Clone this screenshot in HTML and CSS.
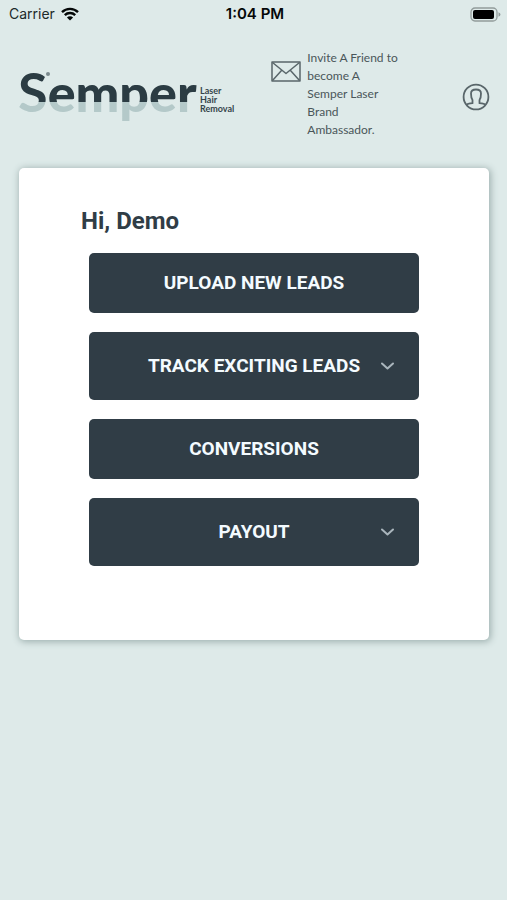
FILE: index.html
```html
<!DOCTYPE html>
<html lang="en">
<head>
<meta charset="utf-8">
<meta name="viewport" content="width=device-width, initial-scale=1">
<title>Semper Laser Hair Removal</title>
<link rel="stylesheet" href="styles.css">
</head>
<body>
<div class="status">
  <div class="carrier">
    <span>Carrier</span>
    <svg width="18" height="14" viewBox="0 0 18 14" aria-hidden="true">
      <path d="M1 5.2a11.4 11.4 0 0 1 16 0M3.8 8.2a7.4 7.4 0 0 1 10.4 0" fill="none" stroke="#050808" stroke-width="2.4"/>
      <path d="M9 13.6 5.9 10.5a4.4 4.4 0 0 1 6.2 0Z" fill="#050808"/>
    </svg>
  </div>
  <time class="time">1:04 PM</time>
  <svg class="battery" width="31" height="15" viewBox="0 0 31 15" aria-hidden="true">
    <rect x="1" y="1" width="26" height="13" rx="4" fill="none" stroke="#929c9b" stroke-width="1.3"/>
    <rect x="3" y="3" width="21" height="9" rx="2" fill="#000"/>
    <path d="M28.5 5.3v4.4q2-.7 2-2.2t-2-2.2Z" fill="#929c9b"/>
  </svg>
</div>
<header class="header">
  <a class="logo" href="#">
    <svg class="mark" width="178" height="60" viewBox="0 0 178 60">
      <defs>
        <linearGradient id="split" gradientUnits="userSpaceOnUse" x1="0" y1="0" x2="0" y2="60">
          <stop offset="0.57" stop-color="#2b3c43"/>
          <stop offset="0.57" stop-color="#b4c9c9"/>
        </linearGradient>
      </defs>
      <text class="wordmark" x="-1" y="44" fill="url(#split)"><tspan class="initial">S</tspan>emper</text>
      <circle cx="29" cy="6" r="2" fill="#7c8b8e"/>
    </svg>
    <span class="tagline"><span>Laser</span><span>Hair</span><span>Removal</span></span>
  </a>
  <a class="invite" href="#">
    <svg class="mail" width="30" height="21" viewBox="0 0 30 21" fill="none" stroke="#59666a" stroke-width="1.5" stroke-linejoin="round" aria-hidden="true">
      <rect x="1" y="1" width="28" height="19"/>
      <path d="M1.500 1.500 15 12.500 28.500 1.500M1.500 19.500 10.500 9.500M28.500 19.500 19.500 9.500"/>
    </svg>
    <span class="invite-text">Invite A Friend to become A Semper Laser Brand Ambassador.</span>
  </a>
  <button class="profile" type="button" aria-label="Profile">
    <svg width="28" height="28" viewBox="0 0 28 28" fill="none" stroke="#59666a" stroke-width="1.8" stroke-linejoin="round" aria-hidden="true">
      <circle cx="14" cy="14" r="12.400"/>
      <path d="M4.500 22q1-1.500 6-1.800v-3.200q-1.500-2-1.500-6.500Q9 6.500 14 6.500t5 4q0 4.500-1.500 6.500v3.200q5 .3 6 1.800"/>
    </svg>
  </button>
</header>
<main class="card">
  <h1 class="greeting">Hi, Demo</h1>
  <nav class="menu">
    <button class="item" type="button"><span class="label">Upload new leads</span></button>
    <button class="item expandable" type="button"><span class="label">Track exciting leads</span>
      <svg class="chevron" width="13" height="8" viewBox="0 0 13 8" aria-hidden="true"><path d="M1 1.500 6.500 6.500 12 1.500"/></svg></button>
    <button class="item" type="button"><span class="label">Conversions</span></button>
    <button class="item expandable" type="button"><span class="label">Payout</span>
      <svg class="chevron" width="13" height="8" viewBox="0 0 13 8" aria-hidden="true"><path d="M1 1.500 6.500 6.500 12 1.500"/></svg></button>
  </nav>
</main>
</body>
</html>
```
FILE: styles.css
```css
* { box-sizing: border-box; }

body {
  margin: 0;
  min-height: 100vh;
  background: #deeae9;
  color: #303d46;
  font-family: Lato, "Liberation Sans", sans-serif;
}

.status {
  display: grid;
  grid-template-columns: 1fr auto 1fr;
  align-items: center;
  height: 28px;
  padding: 0 6px 0 9px;
  color: #20292a;
  font: 14px/20px Inter, sans-serif;
}

.carrier { display: flex; align-items: center; gap: 6px; }
.time { color: #050808; font-size: 15px; font-weight: 600; }
.battery { justify-self: end; }

.header {
  display: flex;
  align-items: flex-start;
  padding: 21px 17px 0 19px;
}

.logo {
  display: flex;
  align-items: flex-start;
  gap: 3px;
  margin-top: 19px;
  color: #35454b;
  text-decoration: none;
}

.mark { overflow: visible; }
.wordmark { font-family: Lato, sans-serif; font-size: 52px; font-weight: 900; }
.initial { font-size: 54px; font-weight: 700; }
.tagline { display: grid; margin-top: 18px; font-size: 9px; font-weight: 700; line-height: 9px; }

.invite {
  display: flex;
  align-items: flex-start;
  gap: 6px;
  margin-left: 37px;
  color: #4a5659;
  text-decoration: none;
}

.mail { flex: none; margin-top: 12px; }
.invite-text { width: 93px; font-size: 12px; line-height: 18px; }

.profile {
  flex: none;
  margin: 34px 0 0 auto;
  padding: 0;
  border: 0;
  background: none;
  line-height: 0;
}

.card {
  margin: 29px 18px 0 19px;
  padding: 37px 70px 74px;
  border-radius: 5px;
  background: #fff;
  box-shadow: 1px 1px 7px 1px #9fb1b0;
}

.greeting {
  margin: 0 -8px 16px;
  font: 700 24px/32px Roboto, sans-serif;
}

.menu { display: grid; gap: 19px; }

.item {
  display: grid;
  grid-template-columns: 1fr auto 1fr;
  align-items: center;
  width: 100%;
  padding: 18px 25px;
  border: 0;
  border-radius: 5px;
  background: #303d46;
  color: #f4fbff;
  font: 700 19px/24px Roboto, sans-serif;
  text-transform: uppercase;
}

.expandable { padding-block: 22px; }
.label { grid-column: 2; white-space: nowrap; }
.chevron { justify-self: end; fill: none; stroke: #a9b5bc; stroke-width: 2; stroke-linecap: round; stroke-linejoin: round; }
```
